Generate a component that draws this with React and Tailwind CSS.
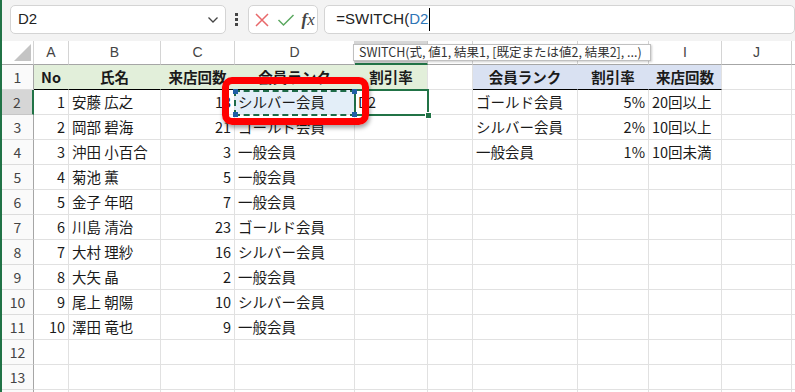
import React from 'react';

const COLS = ['A', 'B', 'C', 'D', 'E', 'F', 'G', 'H', 'I', 'J', ''];

const members = [
  [1, '安藤 広之', 13, 'シルバー会員'],
  [2, '岡部 碧海', 21, 'ゴールド会員'],
  [3, '沖田 小百合', 3, '一般会員'],
  [4, '菊池 薫', 5, '一般会員'],
  [5, '金子 年昭', 7, '一般会員'],
  [6, '川島 清治', 23, 'ゴールド会員'],
  [7, '大村 理紗', 16, 'シルバー会員'],
  [8, '大矢 晶', 2, '一般会員'],
  [9, '尾上 朝陽', 10, 'シルバー会員'],
  [10, '澤田 竜也', 9, '一般会員'],
];

const ranks = [
  ['ゴールド会員', '5%', '20回以上'],
  ['シルバー会員', '2%', '10回以上'],
  ['一般会員', '1%', '10回未満'],
];

const Cell = ({ children, align = 'left', className = '' }) => {
  const a = align === 'right' ? 'justify-end pr-[3px]' : align === 'center' ? 'justify-center' : 'justify-start pl-[3px]';
  return (
    <div className={`h-[25px] flex items-center whitespace-nowrap border-r border-b border-[#e1e1e1] ${a} ${className}`}>
      {children}
    </div>
  );
};

const RowHead = ({ n, active }) => (
  <div
    className={`h-[25px] flex items-center justify-center border-b text-[14px] text-[#444] ${
      active ? 'bg-[#d6d6d6] border-b-[#c6c6c6] border-r-2 border-r-[#217346]' : 'bg-[#fafafa] border-b-[#dcdcdc] border-r border-r-[#a6a6a6]'
    }`}
  >
    {n}
  </div>
);

function rowCells(r) {
  // cells for columns A..J plus the filler column
  if (r === 1) {
    const g = 'bg-[#e2efda] border-r-[#e2efda] border-b-black font-bold';
    const b = 'bg-[#d9e1f2] border-r-[#d9e1f2] border-b-black font-bold';
    return [
      <Cell key="a" align="center" className={g}>No</Cell>,
      <Cell key="b" align="center" className={g}>氏名</Cell>,
      <Cell key="c" align="center" className={g}>来店回数</Cell>,
      <Cell key="d" align="center" className={g}>会員ランク</Cell>,
      <Cell key="e" align="center" className={`${g} !border-r-[#e1e1e1]`}>割引率</Cell>,
      <Cell key="f" />,
      <Cell key="g" align="center" className={b}>会員ランク</Cell>,
      <Cell key="h" align="center" className={b}>割引率</Cell>,
      <Cell key="i" align="center" className={`${b} !border-r-[#e1e1e1]`}>来店回数</Cell>,
      <Cell key="j" />,
      <Cell key="k" />,
    ];
  }
  const m = members[r - 2];
  const k = ranks[r - 2];
  return [
    <Cell key="a" align="right">{m ? m[0] : ''}</Cell>,
    <Cell key="b">{m ? m[1] : ''}</Cell>,
    <Cell key="c" align="right">{m ? m[2] : ''}</Cell>,
    <Cell key="d" className={r === 2 ? 'bg-[#e3eef8]' : ''}>{m ? m[3] : ''}</Cell>,
    <Cell key="e">{r === 2 ? 'D2' : ''}</Cell>,
    <Cell key="f" />,
    <Cell key="g">{k ? k[0] : ''}</Cell>,
    <Cell key="h" align="right">{k ? k[1] : ''}</Cell>,
    <Cell key="i">{k ? k[2] : ''}</Cell>,
    <Cell key="j" />,
    <Cell key="k" />,
  ];
}

export default function App() {
  const rows = Array.from({ length: 14 }, (_, i) => i + 1);
  return (
    <div
      className="relative w-[795px] h-[392px] overflow-hidden bg-white border-l-2 border-[#217346] text-[14.5px] text-[#1a1a1a]"
      style={{ fontFamily: '"Noto Sans CJK JP", "Noto Sans", sans-serif' }}
    >
      {/* formula bar */}
      <div className="h-[41px] bg-[#f3f3f3] flex items-start pt-[5px] pl-[8px]">
        <div className="w-[220px] h-[29px] bg-white border border-[#d4d4d4] rounded-[5px] flex items-center justify-between pl-[7px] pr-[6px]">
          <span className="text-[15px] text-[#222]" style={{ fontFamily: '"Liberation Sans", sans-serif' }}>D2</span>
          <svg width="12" height="8" viewBox="0 0 12 8"><path d="M1.5 1.5 L6 6 L10.5 1.5" fill="none" stroke="#444" strokeWidth="1.3" /></svg>
        </div>
        <div className="w-[22px] h-[29px] flex flex-col items-center justify-center gap-[2px]">
          <span className="w-[3px] h-[3px] bg-[#444]" />
          <span className="w-[3px] h-[3px] bg-[#444]" />
          <span className="w-[3px] h-[3px] bg-[#444]" />
        </div>
        <div className="w-[72px] h-[29px] bg-white border border-[#d4d4d4] rounded-[5px] flex items-center pl-[5px] gap-[7px]">
          <svg width="16" height="16" viewBox="0 0 16 16"><path d="M2 2 L14 14 M14 2 L2 14" stroke="#e8686a" strokeWidth="1.5" /></svg>
          <svg width="18" height="14" viewBox="0 0 18 14"><path d="M1.5 7 L6.5 12 L16.5 2" fill="none" stroke="#5ba860" strokeWidth="1.5" /></svg>
          <span className="italic text-[17px] text-[#444] leading-none" style={{ fontFamily: '"Liberation Serif", serif' }}>
            <span className="font-semibold">f</span>x
          </span>
        </div>
        <div className="ml-[6px] w-[480px] h-[29px] bg-white border border-[#d4d4d4] rounded-[5px] flex items-center pl-[11px] text-[15px] text-[#222]" style={{ fontFamily: '"Liberation Sans", sans-serif' }}>
          <span>=SWITCH(</span>
          <span className="text-[#2e75b6]">D2</span>
          <span className="w-px h-[23px] bg-black ml-[1px]" />
        </div>
      </div>

      {/* sheet grid */}
      <div className="grid grid-cols-[32px_35px_92px_74px_120px_73px_45px_105px_71px_73px_70px_1fr]">
        <div className="h-[24px] bg-white border-r border-b border-r-[#d4d4d4] border-b-[#a6a6a6] flex items-end justify-end pr-[2px] pb-[3px]">
          <svg width="17" height="17" viewBox="0 0 17 17"><path d="M17 0 L17 17 L0 17 Z" fill="#c4c4c4" /></svg>
        </div>
        {COLS.map((c) => (
          <div
            key={c || 'z'}
            className={`h-[24px] flex items-center justify-center border-r text-[14px] text-[#444] ${
              c === 'E' ? 'bg-[#d6d6d6] border-b-2 border-b-[#217346] border-r-[#c6c6c6]' : 'bg-white border-b border-b-[#a6a6a6] border-r-[#d4d4d4]'
            }`}
            style={{ fontFamily: '"Liberation Sans", sans-serif' }}
          >
            {c}
          </div>
        ))}
        {rows.map((r) => (
          <React.Fragment key={r}>
            <RowHead n={r} active={r === 2} />
            {rowCells(r)}
          </React.Fragment>
        ))}
      </div>

      {/* active cell E2 */}
      <div className="absolute left-[352px] top-[89px] w-[75px] h-[27px] border-2 border-[#217346]">
        <span className="absolute -right-[5px] -bottom-[5px] w-[7px] h-[7px] bg-[#217346] border border-white" />
      </div>

      {/* reference marquee D2 */}
      <div className="absolute left-[232px] top-[90px] w-[122px] h-[26px] border-2 border-dashed border-[#1e6b48]">
        <span className="absolute -left-[3px] -top-[3px] w-[5px] h-[5px] bg-[#1f5fa6]" />
        <span className="absolute -right-[3px] -top-[3px] w-[5px] h-[5px] bg-[#1f5fa6]" />
        <span className="absolute -left-[3px] -bottom-[3px] w-[5px] h-[5px] bg-[#1f5fa6]" />
        <span className="absolute -right-[3px] -bottom-[3px] w-[5px] h-[5px] bg-[#1f5fa6]" />
      </div>

      {/* red highlight */}
      <div className="absolute left-[220px] top-[77px] w-[147px] h-[48px] border-[7px] border-[#ff0000] rounded-[10px] shadow-[1px_3px_4px_rgba(0,0,0,0.35)]" />

      {/* function tooltip */}
      <div className="absolute left-[351px] top-[44px] w-[298px] h-[17px] bg-white border border-[#c0c0c0] shadow-[1px_1px_2px_rgba(0,0,0,0.2)] flex items-center pl-[5px] text-[12.5px] text-[#333] whitespace-nowrap">
        SWITCH(式, 値1, 結果1, [既定または値2, 結果2], ...)
      </div>
    </div>
  );
}
